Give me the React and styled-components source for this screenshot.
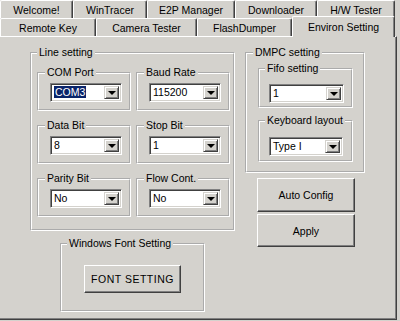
import React from "react";
import styled, { createGlobalStyle } from "styled-components";

const Global = createGlobalStyle`
  html, body {
    margin: 0;
    padding: 0;
    background: #d4d2cd;
  }
  body {
    font-family: "Liberation Sans", Arial, sans-serif;
    font-size: 10.5px;
    color: #000;
  }
`;

const Window = styled.div`
  width: 400px;
  height: 321px;
  overflow: hidden;
  background: #d4d2cd;
`;

const TabRow = styled.div`
  display: flex;
  height: ${(p) => p.$h}px;
  align-items: flex-end;
  position: relative;
  z-index: 1;
`;

const Tab = styled.div`
  width: ${(p) => p.$w}px;
  height: ${(p) => (p.$active ? p.$h + 3 : p.$h)}px;
  margin-bottom: ${(p) => (p.$active ? -1 : 0)}px;
  box-sizing: border-box;
  display: flex;
  align-items: center;
  justify-content: center;
  border-top: 1px solid #fff;
  border-left: 1px solid #fff;
  border-right: 1px solid #404040;
  box-shadow: inset -1px 0 #808080;
  border-radius: 2px 2px 0 0;
  background: #d4d2cd;
  white-space: nowrap;
  padding-top: ${(p) => (p.$active ? 0 : 1)}px;
`;

const Panel = styled.div`
  width: 397px;
  height: 284px;
  box-sizing: border-box;
  border-top: 1px solid #fff;
  border-right: 1px solid #404040;
  border-bottom: 1px solid #404040;
  box-shadow: inset -1px -1px #808080;
  padding: 9px 0 0 30px;
  display: flex;
  gap: 10px;
`;

const Column = styled.div`
  display: flex;
  flex-direction: column;
  align-items: ${(p) => p.$align || "flex-start"};
  gap: ${(p) => p.$gap || 0}px;
  width: ${(p) => p.$w}px;
`;

const Group = styled.fieldset`
  margin: 0;
  min-inline-size: 0;
  width: ${(p) => p.$w}px;
  box-sizing: border-box;
  border: 2px groove #fff;
  padding: ${(p) => p.$pad};
  display: ${(p) => (p.$center ? "flex" : "block")};
  justify-content: center;
`;

const Legend = styled.legend`
  padding: 0 2px;
  margin-left: ${(p) => p.$ml ?? 6}px;
  line-height: 13px;
  font-size: 10.5px;
  white-space: nowrap;
`;

const Grid = styled.div`
  display: grid;
  grid-template-columns: 94px 94px;
  column-gap: 5px;
  row-gap: 8px;
`;

const Combo = styled.div`
  display: flex;
  width: ${(p) => p.$w}px;
  height: 19px;
  box-sizing: border-box;
  border: 1px solid;
  border-color: #808080 #fff #fff #808080;
  box-shadow: inset 1px 1px #404040, inset -1px -1px #d4d2cd;
  background: #fff;
  padding: 2px;
`;

const Value = styled.div`
  flex: 1;
  line-height: 13px;
  padding-left: 1px;
  overflow: hidden;
  white-space: nowrap;
`;

const Selected = styled.span`
  background: #0a246a;
  color: #fff;
  padding: 0 1px;
`;

const Arrow = styled.div`
  width: 15px;
  box-sizing: border-box;
  background: #d4d2cd;
  border: 1px solid;
  border-color: #d4d2cd #404040 #404040 #d4d2cd;
  box-shadow: inset 1px 1px #fff, inset -1px -1px #808080;
  display: flex;
  align-items: center;
  justify-content: center;

  &::after {
    content: "";
    border-left: 4px solid transparent;
    border-right: 4px solid transparent;
    border-top: 4px solid #000;
    margin-top: 1px;
  }
`;

const Button = styled.div`
  width: ${(p) => p.$w}px;
  height: ${(p) => p.$h}px;
  margin-left: ${(p) => p.$ml || 0}px;
  box-sizing: border-box;
  border: 1px solid;
  border-color: #fff #404040 #404040 #fff;
  box-shadow: inset -1px -1px #808080;
  display: flex;
  align-items: center;
  justify-content: center;
  letter-spacing: ${(p) => p.$ls || 0}px;
`;

function ComboBox({ value, w = 72, selected }) {
  return (
    <Combo $w={w}>
      <Value>{selected ? <Selected>{value}</Selected> : value}</Value>
      <Arrow />
    </Combo>
  );
}

function SubGroup({ label, value, selected, w = 94, comboW = 72, pad = "4px 0 7px 11px", ml = -5 }) {
  return (
    <Group $w={w} $pad={pad}>
      <Legend $ml={ml}>{label}</Legend>
      <ComboBox value={value} w={comboW} selected={selected} />
    </Group>
  );
}

const backTabs = [
  ["Welcome!", 73],
  ["WinTracer", 74],
  ["E2P Manager", 88],
  ["Downloader", 82],
  ["H/W Tester", 78],
];

const frontTabs = [
  ["Remote Key", 96],
  ["Camera Tester", 101],
  ["FlashDumper", 95],
  ["Environ Setting", 103, true],
];

const lineSettings = [
  ["COM Port", "COM3", true],
  ["Baud Rate", "115200"],
  ["Data Bit", "8"],
  ["Stop Bit", "1"],
  ["Parity Bit", "No"],
  ["Flow Cont.", "No"],
];

export default function App() {
  return (
    <Window>
      <Global />
      <TabRow $h={18}>
        {backTabs.map(([t, w]) => (
          <Tab key={t} $w={w} $h={18}>
            {t}
          </Tab>
        ))}
      </TabRow>
      <TabRow $h={18}>
        {frontTabs.map(([t, w, active]) => (
          <Tab key={t} $w={w} $h={18} $active={active}>
            {t}
          </Tab>
        ))}
      </TabRow>
      <Panel>
        <Column $w={205} $align="center" $gap={6}>
          <Group $w={205} $pad="7px 7px 12px 5px">
            <Legend $ml={0}>Line setting</Legend>
            <Grid>
              {lineSettings.map(([label, value, sel]) => (
                <SubGroup key={label} label={label} value={value} selected={sel} />
              ))}
            </Grid>
          </Group>
          <Group $w={145} $pad="15px 0 17px 0" $center>
            <Legend $ml={5}>Windows Font Setting</Legend>
            <Button $w={97} $h={28} $ls={0.5}>
              FONT SETTING
            </Button>
          </Group>
        </Column>
        <Column $w={120} $gap={5}>
          <Group $w={120} $pad="3px 0 9px 11px">
            <Legend $ml={-5}>DMPC setting</Legend>
            <Column $w={95} $gap={6}>
              <SubGroup label="Fifo setting" value="1" w={95} comboW={75} pad="9px 0 3px 9px" ml={-4} />
              <SubGroup label="Keyboard layout" value="Type I" w={95} comboW={74} pad="10px 0 4px 9px" ml={-4} />
            </Column>
          </Group>
          <Column $gap={2}>
            <Button $w={98} $h={34} $ml={12}>
              Auto Config
            </Button>
            <Button $w={98} $h={33} $ml={12}>
              Apply
            </Button>
          </Column>
        </Column>
      </Panel>
    </Window>
  );
}
